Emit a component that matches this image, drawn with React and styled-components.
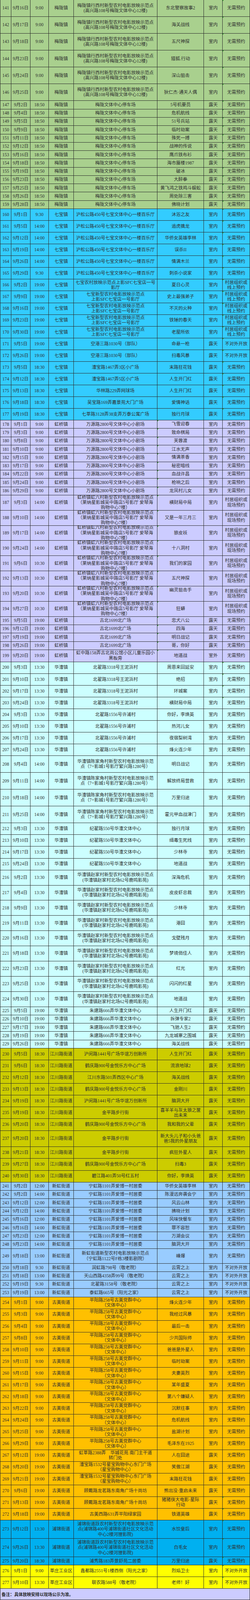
import React from 'react';
import styled, { createGlobalStyle, css } from 'styled-components';

const GlobalStyle = createGlobalStyle`
  html, body {
    margin: 0;
    padding: 0;
    background: #ffffff;
  }
  body {
    font-family: "Liberation Serif", "Noto Sans CJK SC", serif;
  }
`;

const LINE = '#2a2a2a';

// the sheet fills the window; every row takes its share of the height
const Sheet = styled.div`
  width: 640px;
  height: 100vh;
  display: flex;
  flex-direction: column;
`;

const Row = styled.div`
  flex: ${(p) => p.$h} 0 0px;
  min-height: 0;
  display: grid;
  grid-template-columns: 29.4px 48.2px 47.7px 63.7px 214px 119.4px 47.8px 69.8px;
  grid-template-rows: minmax(0, 1fr);
  overflow: hidden;
  background: ${(p) => p.$bg};
`;

const Cell = styled.div`
  position: relative;
  display: flex;
  align-items: ${(p) => (p.$top ? 'flex-start' : 'center')};
  justify-content: center;
  padding-top: ${(p) => (p.$top ? '3px' : '0')};
  min-height: 0;
  box-sizing: border-box;
  border-right: 1px solid ${LINE};
  border-bottom: 1px solid ${LINE};
  overflow: hidden;
  white-space: pre;
  text-align: center;
  font-size: 11.5px;
  line-height: calc(100vh * 15.2 / 4664);
  color: #2e2e2e;

  &:first-child {
    border-left: 1px solid ${LINE};
  }

  ${(p) =>
    p.$tick &&
    css`
      &::before {
        content: '';
        position: absolute;
        left: 0;
        top: 0;
        border-top: 3px solid #1f9a1f;
        border-right: 3px solid transparent;
      }
    `}
`;

const Note = styled.div`
  flex: 31.7 0 0px;
  min-height: 0;
  box-sizing: border-box;
  display: flex;
  align-items: center;
  padding-left: 3px;
  background: #ccccff;
  border: 1px solid ${LINE};
  border-top: none;
  font-size: 10.8px;
  font-weight: 700;
  color: #2a2a2a;
`;

const GREEN = '#a9d08e';
const QIBAO = '#33ccff';
const HONGQIAO = '#ccccff';
const HUACAO = '#ccffff';
const JIANGCHUAN = '#cccc00';
const XINHONG = '#99ccff';
const GUMEI = '#ffc000';
const PUJIN = '#00b0f0';
const XINZHUANG = '#ffff00';

const MLC = '梅陇镇行西村新型农村电影放映示范点\n(高兴路108号梅陇文体中心12楼)';
const QB_SFC = '七宝新型农村电影放映示范点\n上影SFC七宝店一号影厅';
const HQ_LN = '虹桥镇虹六村新型农村电影放映示范点\n（莱纳星影城吴中路店5号影厅 爱琴海\n购物中心7楼）';
const HC_CJJ = '华漕镇陈家角村新型农村电影放映示范\n点（7+影城1号影厅繁兴路1280号）';
const HC_ZJ = '华漕镇赵家村新型农村电影放映示范点\n(华漕镇赵家村北场62号鹿鸣影苑)';
const JC_HM = '沪闵路1441号广场华谊万创新所';
const JC_HQ = '鹤庆路900号金悦乐方中心广场';
const JC_JP = '金平路步行街';
const GM_PY = '平阳路258号古美党群中心\n（文体中心）';
const GM_XB = '漕宝路1532号星宝购物中心东门广场\n（星宝购物中心）';
const GM_SSF = '顾戴路龙茗路东南角广场十尚坊';
const PJ_YN = '浦锦街道跃农村新型农村电影放映示范\n点(浦锦路400号浦锦街道社区文化活动\n中心2楼河狸影院)';

const OPEN = '无需预约';
const CLOSED = '不对外开放';

// each block: shared values, items = [no, date, film, overrides]
const BLOCKS = [
  {
    town: '梅陇镇', bg: GREEN, h: 49.05, time: '9:00', place: MLC, type: '室内', book: OPEN, tick: 'book',
    items: [
      [141, '9月16日', '东北警察故事2'],
      [142, '9月17日', '海关战线'],
      [143, '9月18日', '五尺神探'],
      [144, '9月23日', '猎狐.行动'],
      [145, '9月24日', '深山狙击'],
      [146, '9月25日', '狄仁杰·通天人偶'],
    ],
  },
  {
    town: '梅陇镇', bg: GREEN, h: 24.23, time: '18:50', place: '梅陇文体中心停车场', type: '露天', book: OPEN, tick: 'book',
    items: [
      [147, '9月2日', '5号机要员'],
      [148, '9月4日', '危机航线'],
      [149, '9月5日', '51号兵站'],
      [150, '9月9日', '临时劫案'],
      [151, '9月11日', '殊死一搏'],
      [152, '9月12日', '战神的传说'],
      [153, '9月16日', '鹰爪铁布衫'],
      [154, '9月18日', '海市蜃楼1987'],
      [155, '9月19日', '破冰'],
      [156, '9月23日', '大醉拳'],
      [157, '9月25日', '黄飞鸿之铁鸡斗蜈蚣'],
      [158, '9月26日', '周处除三害'],
      [159, '9月28日', '佛晓计划'],
    ],
  },
  {
    town: '七宝镇', bg: QIBAO, h: 34.24, time: '14:00', place: '沪松公路450号七宝文体中心一楼百乐厅', type: '室内', book: OPEN, tick: 'book',
    items: [
      [160, '9月1日', '沐浴之友', { time: '9:30' }],
      [161, '9月5日', '追虎擒龙'],
      [162, '9月12日', '华侨女英雄李林'],
      [163, '9月19日', '误杀II'],
      [164, '9月26日', '情满木兰'],
      [165, '9月29日', '刺杀小说家', { time: '9:30' }],
    ],
  },
  {
    town: '七宝镇', bg: QIBAO, h: 34.24, time: '19:00', place: QB_SFC, type: '室内', book: '村居组织或\n线上预约', tick: 'book',
    items: [
      [166, '9月2日', '夏日心灵', { place: '七宝农村放映示范点上影SFC七宝店一号\n影厅' }],
      [167, '9月9日', '史上最强弟子'],
      [168, '9月16日', '不灭的火种'],
      [169, '9月23日', '铁锤的春天'],
      [170, '9月30日', '老屋所依'],
    ],
  },
  {
    town: '七宝镇', bg: QIBAO, h: 34.24, time: '19:00', place: '空港三路1030号（部队）', type: '露天', book: CLOSED, tick: 'book',
    items: [
      [171, '9月5日', '命悬一枪'],
      [172, '9月26日', '扫毒风暴'],
    ],
  },
  {
    town: '七宝镇', bg: QIBAO, h: 34.24, time: '18:30', place: '', type: '露天', book: OPEN, tick: 'book',
    items: [
      [173, '9月5日', '末路狂花钱', { place: '漕宝路1467弄3区小广场' }],
      [174, '9月12日', '人生开门红', { place: '漕宝路1467弄5区小广场' }],
      [175, '9月13日', '人生开门红', { place: '华林路229弄网球场' }],
      [176, '9月18日', '爱情神话', { place: '吴宝路169弄嘉景苑大门广场' }],
      [177, '9月19日', '独行月球', { place: '七莘路3128弄38支弄万泰公寓广场' }],
    ],
  },
  {
    town: '虹桥镇', bg: HONGQIAO, h: 24.26, time: '9:00', place: '万源路2800号文体中心小剧场', type: '室内', book: OPEN, tick: 'film',
    items: [
      [178, '9月1日', '飞雪迎春', { top: true }],
      [179, '9月3日', '致命棋局'],
      [180, '9月8日', '芙蓉渡'],
      [181, '9月10日', '江水无声'],
      [182, '9月15日', '情满茶香', { top: true }],
      [183, '9月17日', '秘密暗线'],
      [184, '9月22日', '血战许昌'],
      [185, '9月24日', '枪响之后'],
      [186, '9月29日', '龙凤村儿女'],
    ],
  },
  {
    town: '虹桥镇', bg: HONGQIAO, h: 44.25, time: '14:00', place: HQ_LN, type: '室内', book: '村居组织或\n现场预约', tick: 'film',
    items: [
      [187, '9月3日', '横财局中局'],
      [188, '9月10日', '又是一年三月三'],
      [189, '9月17日', '狼皮袄'],
      [190, '9月24日', '十八洞村'],
      [191, '9月6日', '我们的家园', { time: '10:30' }],
      [192, '9月13日', '五尺神探', { time: '10:30' }],
      [193, '9月20日', '幽灵狙击手', { time: '10:30', top: true }],
      [194, '9月27日', '狂蟒', { time: '10:30' }],
    ],
  },
  {
    town: '虹桥镇', bg: HONGQIAO, h: 24.25, time: '19:00', place: '古北1699北广场', type: '露天', book: OPEN, tick: 'film',
    items: [
      [195, '9月5日', '忠犬八公'],
      [196, '9月12日', '四海'],
      [197, '9月19日', '明日战记'],
      [198, '9月26日', '哥，你好'],
    ],
  },
  {
    town: '虹桥镇', bg: HONGQIAO, h: 35, time: '19:00', place: '虹中路158弄古北尚公馆小区儿童乐园小\n黑板旁', type: '室外', book: OPEN, tick: 'film',
    items: [[199, '9月20日', '地道战']],
  },
  {
    town: '华漕镇', bg: HUACAO, h: 34.25, time: '13:30', place: '北翟路3318号王泥浜村', type: '室内', book: OPEN, tick: 'book',
    items: [
      [200, '9月3日', '周恩来回延安'],
      [201, '9月10日', '绝招'],
      [202, '9月17日', '环城案'],
      [203, '9月24日', '横财局中局'],
    ],
  },
  {
    town: '华漕镇', bg: HUACAO, h: 34.25, time: '13:30', place: '北翟路1556号许浦村', type: '室内', book: OPEN,
    items: [
      [204, '9月3日', '你好，李焕英'],
      [205, '9月10日', '热河儿女'],
      [206, '9月17日', '夜宿梨树湾'],
      [207, '9月24日', '烽火连少年'],
    ],
  },
  {
    town: '华漕镇', bg: HUACAO, h: 49, time: '14:00', place: HC_CJJ, type: '室内', book: OPEN,
    items: [
      [208, '9月4日', '明日战记'],
      [209, '9月11日', '解放终局营救'],
      [210, '9月18日', '万里归途'],
      [211, '9月25日', '霍元甲血战津门'],
    ],
  },
  {
    town: '华漕镇', bg: HUACAO, h: 34.25, time: '13:30', place: '纪翟路550号华漕文体中心', type: '室内', book: OPEN,
    items: [
      [212, '9月3日', '独行月球'],
      [213, '9月10日', '缉毒生死线'],
      [214, '9月17日', '少林寺'],
      [215, '9月24日', '地道战'],
    ],
  },
  {
    town: '华漕镇', bg: HUACAO, h: 44.3, time: '13:30', place: HC_ZJ, type: '室内', book: OPEN,
    items: [
      [216, '9月2日', '深海危机'],
      [217, '9月4日', '皮皮虾总裁'],
      [218, '9月9日', '少林寺'],
      [219, '9月11日', '港囧'],
      [220, '9月16日', '戈壁残月'],
      [221, '9月18日', '梦境俏佳人'],
      [222, '9月23日', '红光'],
      [223, '9月25日', '闪闪的红星'],
      [224, '9月30日', '地道战'],
    ],
  },
  {
    town: '华漕镇', bg: HUACAO, h: 24.2, time: '19:00', place: '朱建路666弄华漕文体中心', type: '露天', book: OPEN,
    items: [
      [225, '9月5日', '人生开门红'],
      [226, '9月10日', '拆弹专家2'],
      [227, '9月17日', '飞驰人生2'],
      [228, '9月19日', '九龙城寨之围城'],
      [229, '9月26日', '海关战线'],
    ],
  },
  {
    town: '江川路街道', bg: JIANGCHUAN, h: 34.27, time: '18:30', place: JC_HQ, type: '露天', book: OPEN,
    items: [
      [230, '9月5日', '人生开门红', { place: JC_HM }],
      [231, '9月6日', '流浪地球2'],
      [232, '9月12日', '海关战线', { place: '江川东路501弄西区中心广场' }],
      [233, '9月13日', '金刚川'],
      [234, '9月19日', '脑洞大开', { place: JC_HM }],
      [235, '9月19日', '喜羊羊与灰太狼之筐\n出未来', { place: JC_JP }],
      [236, '9月20日', '我和我的父辈'],
      [237, '9月20日', '新大头儿子和小头爸\n爸5我的外星朋友', { place: JC_JP, h: 47.6 }],
      [238, '9月21日', '疯狂外星人', { place: JC_JP }],
      [239, '9月27日', '扫毒3'],
      [240, '9月30日', '你好，李焕英', { place: '碧江路401弄50号红五村' }],
    ],
  },
  {
    town: '新虹街道', bg: XINHONG, h: 24.25, time: '12:00', place: '宁虹路1101弄爱博一村居委', type: '室内', book: OPEN,
    items: [
      [241, '9月2日', '华侨女英雄李林'],
      [242, '9月2日', '陈漫远奔袭会宁', { time: '14:00' }],
      [243, '9月12日', '风云山林'],
      [244, '9月12日', '拂晓计划', { time: '14:00' }],
      [245, '9月16日', '风味快餐车'],
      [246, '9月16日', '罪不容恕', { time: '14:00' }],
      [247, '9月23日', '万湖会议'],
      [248, '9月23日', '脑洞大开', { time: '14:00' }],
    ],
  },
  {
    town: '新虹街道', bg: XINHONG, h: 43.3, time: '13:00', place: '新虹街道新型农村电影放映示范点\n（宁虹路1122号F栋3楼影剧院）', type: '室内', book: OPEN,
    items: [[249, '9月18日', '峰爆']],
  },
  {
    town: '新虹街道', bg: XINHONG, h: 24.35, time: '13:00', place: '', type: '室内', book: CLOSED,
    items: [
      [250, '9月18日', '云霄之上', { time: '9:30', place: '润虹路798号（敬老院）' }],
      [251, '9月18日', '云霄之上', { place: '天山西路4358弄99号（敬老院）' }],
      [252, '9月19日', '云霄之上', { time: '9:30', place: '北翟路3158号（敬老院）' }],
      [253, '9月19日', '云霄之上', { place: '泰虹路665号（阳光之家）' }],
    ],
  },
  {
    town: '古美街道', bg: GUMEI, h: 34.26, time: '9:00', place: GM_PY, type: '室内', book: OPEN,
    items: [
      [254, '9月1日', '烽火连少年'],
      [255, '9月3日', '我经过风暴'],
      [256, '9月4日', '最后一击'],
      [257, '9月8日', '少共国际师'],
      [258, '9月10日', '爸爸是外星人'],
      [259, '9月11日', '临时劫案'],
      [260, '9月15日', '夫妻英烈'],
      [261, '9月17日', '某年盛夏'],
      [262, '9月18日', '第八个嫌疑人'],
      [263, '9月22日', '沉默往事'],
      [264, '9月24日', '危机航线'],
      [265, '9月25日', '盐湖计划'],
      [266, '9月29日', '毛泽东在1925'],
    ],
  },
  {
    town: '古美街道', bg: GUMEI, h: 34.26, time: '19:00', place: GM_XB, type: '露天', book: OPEN,
    items: [
      [267, '9月12日', '人在囧途', { place: '虹莘路2388弄　华城花苑 南门主干道\n转门处' }],
      [268, '9月20日', '笑傲江湖'],
      [269, '9月21日', '末路狂花钱'],
      [270, '9月6日', '熊出没·重启未来', { place: GM_SSF }],
      [271, '9月13日', '猪猪侠大电影·星际\n行动', { place: GM_SSF, tick: 'book' }],
      [272, '9月18日', '铁道英雄', { place: '古美西路631弄平阳绿家园', tick: 'book' }],
    ],
  },
  {
    town: '浦锦街道', bg: PUJIN, h: 53.65, time: '13:30', place: PJ_YN, type: '室内', book: OPEN, tick: 'book',
    items: [
      [273, '9月12日', '水饺皇后'],
      [274, '9月26日', '白毛女'],
    ],
  },
  {
    town: '浦锦街道', bg: PUJIN, h: 24, time: '18:30', place: '浦秀路183弄景舒苑二居委', type: '露天', book: OPEN, tick: 'book',
    items: [[275, '9月20日', '万里归途']],
  },
  {
    town: '莘庄工业区', bg: XINZHUANG, h: 34.15, time: '9:00', place: '', type: '室内', book: CLOSED, tick: 'book',
    items: [
      [276, '9月1日', '烈焰卫士', { place: '鑫都路2551号1楼西侧（阳光之家）' }],
      [277, '9月10日', '老师！好', { time: '13:30', place: '联农路588号（敬老院）' }],
    ],
  },
];

function ScreeningRow({ block, item }) {
  const [no, date, film, o = {}] = item;
  const tick = o.tick !== undefined ? o.tick : block.tick;
  return (
    <Row $h={o.h || block.h} $bg={block.bg}>
      <Cell>{no}</Cell>
      <Cell>{date}</Cell>
      <Cell>{o.time || block.time}</Cell>
      <Cell>{block.town}</Cell>
      <Cell>{o.place || block.place}</Cell>
      <Cell $tick={tick === 'film'} $top={o.top}>{film}</Cell>
      <Cell>{o.type || block.type}</Cell>
      <Cell $tick={tick === 'book'}>{block.book}</Cell>
    </Row>
  );
}

export default function App() {
  return (
    <>
      <GlobalStyle />
      <Sheet>
        {BLOCKS.flatMap((block) =>
          block.items.map((item) => (
            <ScreeningRow key={item[0]} block={block} item={item} />
          )),
        )}
        <Note>备注：具体放映安排以现场公示为准。</Note>
      </Sheet>
    </>
  );
}
